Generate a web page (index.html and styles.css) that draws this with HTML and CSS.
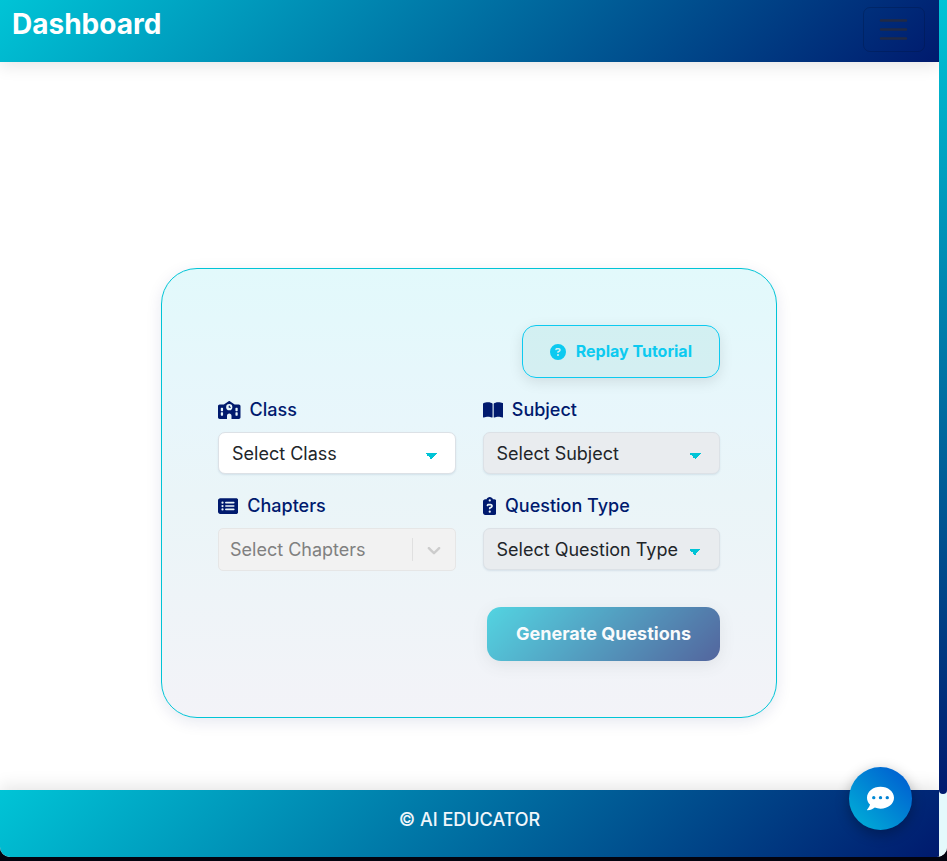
FILE: index.html
```html
<!DOCTYPE html>
<html lang="en">
<head>
<meta charset="utf-8">
<meta name="viewport" content="width=device-width, initial-scale=1">
<title>Dashboard</title>
<link rel="stylesheet" href="styles.css">
</head>
<body>
<div class="window">
  <div class="page">
    <header class="topbar">
      <h1 class="brand">Dashboard</h1>
      <button class="toggler" type="button" aria-label="Toggle navigation">
        <svg viewBox="0 0 30 30" aria-hidden="true"><path d="M2 5.500h25M2 14.500h25M2 23.500h25" fill="none" stroke="#212a45" stroke-width="2.500" stroke-linecap="round"/></svg>
      </button>
    </header>

    <main class="main">
      <form class="card">
        <button class="btn replay" type="button">
          <svg class="icon" viewBox="0 0 512 512" aria-hidden="true"><path fill-rule="evenodd" d="M256 512A256 256 0 1 0 256 0a256 256 0 1 0 0 512zM169.800 165.300c7.900-22.300 29.100-37.300 52.800-37.300h58.300c34.900 0 63.100 28.300 63.100 63.100c0 22.600-12.100 43.500-31.700 54.800L280 264.400c-.2 13-10.900 23.600-24 23.600c-13.300 0-24-10.700-24-24V250.500c0-8.600 4.600-16.500 12.100-20.800l44.300-25.400c4.700-2.700 7.600-7.700 7.600-13.100c0-8.400-6.800-15.100-15.100-15.100H222.600c-3.400 0-6.400 2.100-7.500 5.300l-.4 1.200c-4.400 12.500-18.200 19-30.600 14.600s-19-18.200-14.600-30.600l.4-1.200zM224 352a32 32 0 1 1 64 0 32 32 0 1 1-64 0z"/></svg>
          Replay Tutorial
        </button>

        <div class="fields">
          <div class="field">
            <label for="class">
              <svg class="icon" viewBox="0 0 640 512" aria-hidden="true"><path fill-rule="evenodd" d="M337.800 5.400C327-1.800 313-1.800 302.200 5.400L166.300 96H48C21.500 96 0 117.500 0 144V464c0 26.500 21.500 48 48 48H256V416c0-35.300 28.700-64 64-64s64 28.700 64 64v96H592c26.500 0 48-21.500 48-48V144c0-26.500-21.500-48-48-48H473.700L337.800 5.400zM96 192h32c8.800 0 16 7.200 16 16v64c0 8.800-7.200 16-16 16H96c-8.800 0-16-7.200-16-16V208c0-8.800 7.200-16 16-16zm400 16c0-8.800 7.200-16 16-16h32c8.800 0 16 7.200 16 16v64c0 8.800-7.200 16-16 16H512c-8.800 0-16-7.200-16-16V208zM96 320h32c8.800 0 16 7.200 16 16v64c0 8.800-7.200 16-16 16H96c-8.800 0-16-7.200-16-16V336c0-8.800 7.200-16 16-16zm400 16c0-8.800 7.200-16 16-16h32c8.800 0 16 7.200 16 16v64c0 8.800-7.200 16-16 16H512c-8.800 0-16-7.200-16-16V336zM232 176a88 88 0 1 1 176 0 88 88 0 1 1-176 0zm88-48c-8.800 0-16 7.200-16 16v32c0 8.800 7.200 16 16 16h32c8.800 0 16-7.200 16-16s-7.200-16-16-16H336V144c0-8.800-7.200-16-16-16z"/></svg>
              Class
            </label>
            <select id="class" class="select"><option>Select Class</option></select>
          </div>

          <div class="field">
            <label for="subject">
              <svg class="icon" viewBox="0 0 576 512" aria-hidden="true"><path d="M249.600 471.500c10.800 3.800 22.400-4.100 22.400-15.500V78.600c0-4.200-1.600-8.400-5-11C247.400 52 202.400 32 144 32C93.500 32 46.300 45.300 18.100 56.100C6.800 60.500 0 71.700 0 83.800V454.100c0 11.900 12.800 20.200 24.100 16.500C55.600 460.100 105.500 448 144 448c33.900 0 79 14 105.600 23.500zm76.800 0C353 462 398.100 448 432 448c38.500 0 88.400 12.100 119.900 22.600c11.300 3.800 24.100-4.600 24.100-16.500V83.800c0-12.100-6.800-23.300-18.100-27.600C529.700 45.300 482.500 32 432 32c-58.400 0-103.400 20-123 35.600c-3.300 2.600-5 6.800-5 11V456c0 11.400 11.700 19.300 22.400 15.500z"/></svg>
              Subject
            </label>
            <select id="subject" class="select" disabled><option>Select Subject</option></select>
          </div>

          <div class="field">
            <label for="chapters">
              <svg class="icon" viewBox="0 0 576 512" aria-hidden="true"><path fill-rule="evenodd" d="M0 96C0 60.700 28.700 32 64 32H512c35.300 0 64 28.700 64 64V416c0 35.300-28.700 64-64 64H64c-35.300 0-64-28.700-64-64V96zM128 288a32 32 0 1 0 0-64 32 32 0 1 0 0 64zm32-128a32 32 0 1 0-64 0 32 32 0 1 0 64 0zM128 384a32 32 0 1 0 0-64 32 32 0 1 0 0 64zm96-248c-13.300 0-24 10.700-24 24s10.700 24 24 24H448c13.300 0 24-10.700 24-24s-10.700-24-24-24H224zm0 96c-13.300 0-24 10.700-24 24s10.700 24 24 24H448c13.300 0 24-10.700 24-24s-10.700-24-24-24H224zm0 96c-13.300 0-24 10.700-24 24s10.700 24 24 24H448c13.300 0 24-10.700 24-24s-10.700-24-24-24H224z"/></svg>
              Chapters
            </label>
            <div class="combo">
              <select id="chapters" disabled><option>Select Chapters</option></select>
              <span class="divider"></span>
              <svg class="chevron" viewBox="0 0 20 20" aria-hidden="true"><path d="M4.516 7.548c0.436-0.446 1.043-0.481 1.576 0l3.908 3.747 3.908-3.747c0.533-0.481 1.141-0.446 1.574 0 0.436 0.445 0.408 1.197 0 1.615-0.406 0.418-4.695 4.502-4.695 4.502-0.217 0.223-0.502 0.335-0.787 0.335s-0.570-0.112-0.789-0.335c0 0-4.287-4.084-4.695-4.502s-0.436-1.170 0-1.615z"/></svg>
            </div>
          </div>

          <div class="field">
            <label for="qtype">
              <svg class="icon" viewBox="0 0 384 512" aria-hidden="true"><path fill-rule="evenodd" d="M192 0c-41.800 0-77.400 26.700-90.500 64H64C28.700 64 0 92.700 0 128V448c0 35.300 28.700 64 64 64H320c35.300 0 64-28.700 64-64V128c0-35.300-28.700-64-64-64H282.500C269.400 26.700 233.800 0 192 0zm0 64a32 32 0 1 1 0 64 32 32 0 1 1 0-64zM105.800 229.300c7.900-22.300 29.100-37.300 52.800-37.300h58.300c34.900 0 63.100 28.300 63.100 63.100c0 22.600-12.100 43.500-31.700 54.800L216 328.400c-.2 13-10.900 23.600-24 23.600c-13.300 0-24-10.700-24-24V314.500c0-8.600 4.600-16.500 12.100-20.800l44.300-25.400c4.700-2.700 7.600-7.700 7.600-13.100c0-8.400-6.800-15.100-15.100-15.100H158.600c-3.400 0-6.400 2.100-7.500 5.300l-.4 1.200c-4.400 12.500-18.200 19-30.600 14.600s-19-18.200-14.600-30.600l.4-1.200zM160 416a32 32 0 1 1 64 0 32 32 0 1 1-64 0z"/></svg>
              Question Type
            </label>
            <select id="qtype" class="select" disabled><option>Select Question Type</option></select>
          </div>
        </div>

        <button class="btn generate" type="submit" disabled>Generate Questions</button>
      </form>
    </main>

    <footer class="footer">© AI EDUCATOR</footer>
  </div>
  <div class="track"><div class="thumb"></div></div>
</div>

<button class="chat" type="button" aria-label="Open chat">
  <svg viewBox="0 0 512 512" aria-hidden="true"><path fill-rule="evenodd" d="M256 32C114.600 32 0 125.100 0 240c0 49.600 21.400 95 57 130.700C44.500 421.100 2.700 466 2.200 466.500c-2.200 2.300-2.800 5.700-1.500 8.700S4.800 480 8 480c66.300 0 116-31.800 140.600-51.400 32.700 12.300 69 19.400 107.400 19.400 141.400 0 256-93.100 256-208S397.400 32 256 32zM96 240a32 32 0 1 1 64 0 32 32 0 1 1-64 0zM224 240a32 32 0 1 1 64 0 32 32 0 1 1-64 0zM352 240a32 32 0 1 1 64 0 32 32 0 1 1-64 0z"/></svg>
</button>
</body>
</html>
```
FILE: styles.css
```css
:root {
  --cyan: #00c4d6;
  --navy: #001a6e;
  --brand-gradient: linear-gradient(135deg, var(--cyan), var(--navy));
}

* {
  box-sizing: border-box;
}

body {
  margin: 0;
  background: #02030f;
  font-family: Inter, "Liberation Sans", sans-serif;
  font-size: 18px;
  line-height: 27px;
  color: #212529;
}

button,
select {
  font: inherit;
}

.window {
  display: flex;
  min-height: calc(100vh - 4px);
  border-radius: 0 0 10px 10px;
  overflow: hidden;
  background: #fff;
}

.page {
  flex: 1;
  display: flex;
  flex-direction: column;
}

.track {
  width: 8px;
  background: #e4f9fc;
}

.thumb {
  height: 794px;
  border-radius: 0 0 4px 4px;
  background: linear-gradient(180deg, var(--cyan), var(--navy));
}

.topbar {
  display: flex;
  justify-content: space-between;
  align-items: flex-start;
  height: 62px;
  padding: 7px 14px 0 12px;
  background: var(--brand-gradient);
  box-shadow: 0 4px 16px rgba(0, 0, 0, 0.1);
}

.brand {
  margin: 0;
  font-size: 28px;
  line-height: 35px;
  font-weight: 700;
  color: #fff;
}

.toggler {
  display: flex;
  align-items: center;
  justify-content: center;
  width: 62px;
  height: 45px;
  padding: 0;
  border: 1px solid rgba(0, 20, 60, 0.3);
  border-radius: 7px;
  background: none;
}

.toggler svg {
  width: 30px;
  height: 30px;
}

.main {
  flex: 1;
  display: flex;
  align-items: flex-end;
  justify-content: center;
  padding: 72px 25px 72px 24px;
}

.card {
  display: flex;
  flex-direction: column;
  width: 100%;
  max-width: 616px;
  padding: 56px;
  border: 1px solid var(--cyan);
  border-radius: 36px;
  background: linear-gradient(180deg, #e2f9fb, #e8f6fb 34%, #eaf5f8 50%, #f3f3f8);
  box-shadow: 0 4px 16px rgba(0, 26, 110, 0.1);
}

.btn {
  align-self: flex-end;
  display: flex;
  align-items: center;
  border-radius: 14px;
  font-weight: 700;
}

.icon {
  height: 18px;
  fill: currentColor;
}

.replay {
  gap: 10px;
  padding: 12px 27px;
  border: 1px solid #0dcaf0;
  background: rgba(0, 150, 136, 0.08);
  box-shadow: 0 4px 14px rgba(0, 0, 0, 0.1);
  font-size: 16px;
  color: #0dcaf0;
}

.replay .icon {
  height: 16px;
}

.fields {
  display: grid;
  grid-template-columns: 1fr 1fr;
  gap: 18px 27px;
  margin-top: 18px;
}

.field {
  min-width: 0;
}

.field label {
  display: flex;
  align-items: center;
  gap: 9px;
  margin-bottom: 9px;
  font-weight: 500;
  color: var(--navy);
}

.select {
  display: block;
  width: 100%;
  height: 42px;
  padding: 0 13px;
  border: 1px solid #dce1e6;
  border-radius: 7px;
  appearance: none;
  color: #212529;
  background-color: #fff;
  background-image:
    linear-gradient(45deg, transparent 50%, var(--cyan) 50%),
    linear-gradient(135deg, var(--cyan) 50%, transparent 50%);
  background-position: right 24px top 20px, right 18px top 20px;
  background-size: 6px 6px;
  background-repeat: no-repeat;
  box-shadow: 0 1px 2px rgba(0, 60, 110, 0.1);
}

.select:disabled {
  background-color: #e9ecef;
  opacity: 1;
}

.combo {
  display: flex;
  align-items: center;
  height: 43px;
  padding-right: 10px;
  border: 1px solid #e6e6e6;
  border-radius: 5px;
  background: #f2f2f2;
}

.combo select {
  flex: 1;
  min-width: 0;
  padding: 0 11px;
  border: 0;
  appearance: none;
  background: none;
  color: #808080;
  opacity: 1;
}

.divider {
  width: 1px;
  height: 23px;
  margin-right: 10px;
  background: #e0e0e0;
}

.chevron {
  width: 22px;
  height: 22px;
  fill: #ccc;
}

.generate {
  margin-top: 36px;
  padding: 13px 29px;
  border: 0;
  background: var(--brand-gradient);
  box-shadow: 0 4px 16px rgba(0, 0, 0, 0.1);
  line-height: 28px;
  color: #fff;
  opacity: 0.65;
}

.footer {
  padding: 16px 16px 24px;
  background: var(--brand-gradient);
  box-shadow: 0 -4px 16px rgba(0, 0, 0, 0.1);
  font-weight: 500;
  text-align: center;
  color: #f0f6fb;
}

.chat {
  position: fixed;
  right: 35px;
  bottom: 31px;
  display: flex;
  align-items: center;
  justify-content: center;
  width: 63px;
  height: 63px;
  padding: 0;
  border: 0;
  border-radius: 50%;
  background: linear-gradient(45deg, #00b4d8, #0057d0);
  box-shadow: 0 4px 14px rgba(0, 0, 0, 0.3);
}

.chat svg {
  width: 27px;
  height: 27px;
  fill: #fff;
}
```
